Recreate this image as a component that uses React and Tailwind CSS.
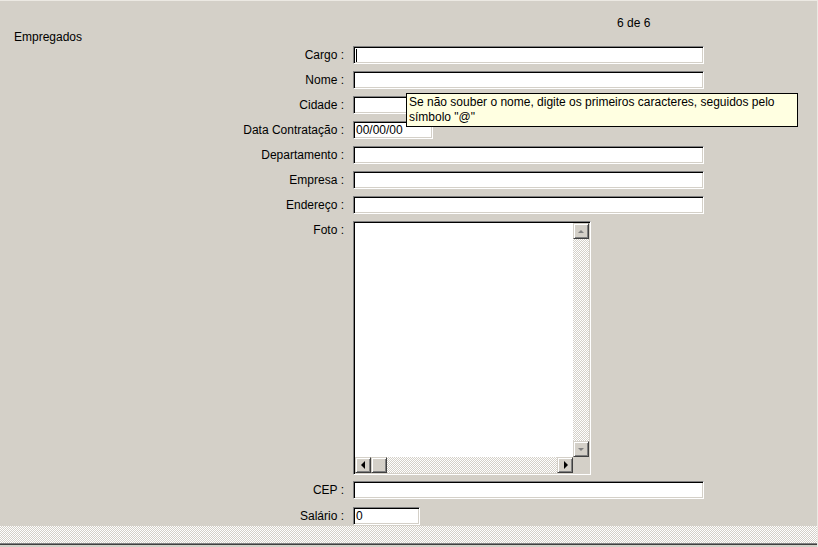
import React from 'react'

const sunken =
  'border border-t-[#808080] border-l-[#808080] border-b-white border-r-white shadow-[inset_1px_1px_0_#000,inset_-1px_-1px_0_#d4d0c8] bg-white'
const raised =
  'border border-t-[#d4d0c8] border-l-[#d4d0c8] border-b-[#404040] border-r-[#404040] shadow-[inset_1px_1px_0_#fff,inset_-1px_-1px_0_#808080] bg-[#d4d0c8]'
const checker =
  'bg-[image:repeating-conic-gradient(#d4d0c8_0_25%,#ffffff_0_50%)] bg-[length:2px_2px]'

const Arrow = ({ dir, color = '#000' }) => {
  const pts = {
    up: '1,5 4,2 7,5',
    down: '1,2 4,5 7,2',
    left: '5,0 5,8 1,4',
    right: '2,0 2,8 6,4',
  }
  const vertical = dir === 'up' || dir === 'down'
  return (
    <svg width={vertical ? 8 : 7} height={vertical ? 7 : 8} viewBox={vertical ? '0 0 8 7' : '0 0 7 8'}>
      <polygon points={pts[dir]} fill={color} />
    </svg>
  )
}

const ScrollBtn = ({ dir, color }) => (
  <div className={`w-[16px] h-[16px] flex items-center justify-center ${raised}`}>
    <Arrow dir={dir} color={color} />
  </div>
)

const Field = ({ width, value, caret }) => (
  <div
    className={`h-[18px] flex items-center pl-[2px] text-[12px] leading-none text-black ${sunken}`}
    style={{ width }}
  >
    {caret && <span className="w-[1px] h-[13px] bg-black" />}
    {value}
  </div>
)

const Row = ({ label, children, top, className = '' }) => (
  <div className={`grid grid-cols-[344px_1fr] gap-x-[9px] ${top ? 'items-start' : 'items-center'} ${className}`}>
    <div className={`text-right text-[12px] ${top ? 'leading-[18px]' : 'leading-none'}`}>{label}</div>
    <div>{children}</div>
  </div>
)

export default function App() {
  return (
    <div
      className="w-[818px] h-[547px] bg-[#d4d0c8] relative overflow-hidden flex flex-col text-black border-t border-r border-[#ece9e3]"
      style={{ fontFamily: '"Liberation Sans", Arial, sans-serif' }}
    >
      {/* header */}
      <div className="pt-[15px] text-[12px] leading-[14px]">
        <div className="pl-[617px]">6 de 6</div>
        <div className="pl-[14px]">Empregados</div>
      </div>

      {/* form */}
      <div className="mt-[2px] flex flex-col">
        <Row label="Cargo :">
          <Field width={351} caret />
        </Row>
        <Row label="Nome :" className="mt-[7px]">
          <Field width={351} />
        </Row>
        <Row label="Cidade :" className="mt-[7px]">
          <Field width={351} />
        </Row>
        <Row label="Data Contratação :" className="mt-[7px]">
          <Field width={80} value="00/00/00" />
        </Row>
        <Row label="Departamento :" className="mt-[7px]">
          <Field width={351} />
        </Row>
        <Row label="Empresa :" className="mt-[7px]">
          <Field width={351} />
        </Row>
        <Row label="Endereço :" className="mt-[7px]">
          <Field width={351} />
        </Row>
        <Row label="Foto :" top className="mt-[7px]">
          <div className={`w-[238px] h-[254px] p-[1px] ${sunken}`}>
            <div className="w-full h-full grid grid-cols-[1fr_16px] grid-rows-[1fr_16px]">
              <div className="bg-white" />
              <div className="flex flex-col">
                <ScrollBtn dir="up" color="#808080" />
                <div className={`flex-1 ${checker}`} />
                <ScrollBtn dir="down" color="#808080" />
              </div>
              <div className="flex">
                <ScrollBtn dir="left" />
                <div className={`w-[16px] h-[16px] ${raised}`} />
                <div className={`flex-1 ${checker}`} />
                <ScrollBtn dir="right" />
              </div>
              <div className="bg-[#d4d0c8]" />
            </div>
          </div>
        </Row>
        <Row label="CEP :" className="mt-[6px]">
          <Field width={351} />
        </Row>
        <Row label="Salário :" className="mt-[8px]">
          <Field width={67} value="0" />
        </Row>
      </div>

      {/* bottom edge */}
      <div className={`mt-[1px] h-[17px] ${checker}`} />
      <div className="h-[1px] bg-[#808080]" />
      <div className="h-[1px] bg-[#404040]" />
      <div className="flex-1 bg-[#d4d0c8]" />

      {/* tooltip */}
      <div className="absolute left-[406px] top-[92px] w-[392px] h-[34px] bg-[#ffffe1] border border-black px-[2px] pt-[1px] text-[12px] leading-[15px]">
        Se não souber o nome, digite os primeiros caracteres, seguidos pelo símbolo "@"
      </div>
    </div>
  )
}
